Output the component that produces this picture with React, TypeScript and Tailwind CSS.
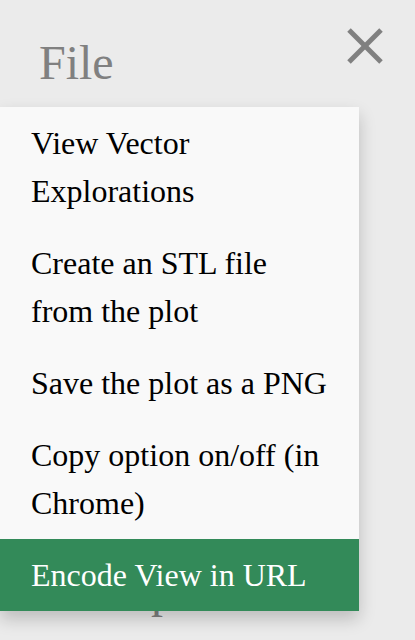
import React from "react";

const items = [
  "View Vector Explorations",
  "Create an STL file from the plot",
  "Save the plot as a PNG",
  "Copy option on/off (in Chrome)",
];

export default function App() {
  return (
    <div
      className="relative w-full h-[640px] overflow-hidden bg-[#ebebeb]"
      style={{ fontFamily: '"Liberation Serif", "Times New Roman", serif' }}
    >
      <div className="flex justify-between items-start pt-[28px] pl-[39px] pr-[32px]">
        <div className="mt-[11px] text-[48px] leading-[48px] text-[#808080]">File</div>
        <svg width="36" height="36" viewBox="0 0 36 36" className="block">
          <line x1="2" y1="2" x2="34" y2="34" stroke="#808080" strokeWidth="5" />
          <line x1="34" y1="2" x2="2" y2="34" stroke="#808080" strokeWidth="5" />
        </svg>
      </div>
      <div className="mt-[480px] pl-[39px] text-[48px] leading-[48px] text-[#808080]">Examples</div>

      <div className="absolute left-0 top-[107px] w-[359px] bg-[#f9f9f9] shadow-[0_8px_16px_0_rgba(0,0,0,0.2)]">
        {items.map((t) => (
          <div key={t} className="pl-[31px] pr-[28px] py-3 text-[32px] leading-[48px] text-black">
            {t}
          </div>
        ))}
        <div className="pl-[31px] pr-[28px] py-3 text-[32px] leading-[48px] text-white bg-[#338a59]">
          Encode View in URL
        </div>
      </div>
    </div>
  );
}
